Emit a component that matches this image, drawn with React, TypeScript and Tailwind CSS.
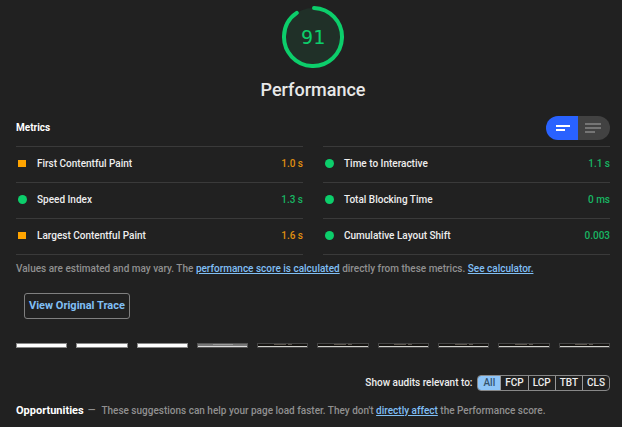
import { useState } from 'react';

type Rating = 'pass' | 'average';
type Metric = { title: string; value: string; rating: Rating };

const columns: Metric[][] = [
  [
    { title: 'First Contentful Paint', value: '1.0 s', rating: 'average' },
    { title: 'Speed Index', value: '1.3 s', rating: 'pass' },
    { title: 'Largest Contentful Paint', value: '1.6 s', rating: 'average' },
  ],
  [
    { title: 'Time to Interactive', value: '1.1 s', rating: 'pass' },
    { title: 'Total Blocking Time', value: '0 ms', rating: 'pass' },
    { title: 'Cumulative Layout Shift', value: '0.003', rating: 'pass' },
  ],
];

const frames = ['blank', 'blank', 'blank', 'partial', 'full', 'full', 'full', 'full', 'full', 'full'];
const filters = ['All', 'FCP', 'LCP', 'TBT', 'CLS'];

function Gauge() {
  return (
    <div className="flex flex-col items-center">
      <svg width="62" height="62" viewBox="0 0 62 62" role="img" aria-label="Score 91">
        <circle cx="31" cy="31" r="29" fill="#203028" />
        <circle
          cx="31"
          cy="31"
          r="29"
          fill="none"
          stroke="#0cce6b"
          strokeWidth="4"
          strokeLinecap="round"
          pathLength="100"
          strokeDasharray="90 100"
          transform="rotate(-88 31 31)"
        />
        <text
          x="31"
          y="38"
          textAnchor="middle"
          fontSize="20"
          fontWeight="400"
          fill="#0cce6b"
          className="font-['DejaVu_Sans_Mono',monospace]"
        >
          91
        </text>
      </svg>
      <h1 className="mt-2 text-[18px] leading-7 font-medium text-[#e8e8e8]">Performance</h1>
    </div>
  );
}

function MetricRow({ title, value, rating }: Metric) {
  const pass = rating === 'pass';
  return (
    <div className="flex h-9 items-center border-t border-[#3a3a3a] pb-0.5 pl-0.5">
      <span className={pass ? 'size-[9px] rounded-full bg-[#0cce6b]' : 'h-[7px] w-2 bg-[#ffa400]'} />
      <span className={pass ? 'ml-2.5 text-[#eeeeee]' : 'ml-[11px] text-[#eeeeee]'}>{title}</span>
      <span className={pass ? 'ml-auto text-[#18b663]' : 'ml-auto text-[#e09010]'}>{value}</span>
    </div>
  );
}

function ViewToggle() {
  return (
    <fieldset className="relative flex h-6 w-16 overflow-hidden rounded-full">
      <label className="flex w-8 items-center justify-center bg-[#2962ff]">
        <input type="radio" name="view" defaultChecked aria-label="Simple view" className="sr-only" />
        <svg width="16" height="16" viewBox="0 0 16 16" fill="#fff">
          <path d="M2 5h14v2H2zM2 9h9v2H2z" />
        </svg>
      </label>
      <label className="flex w-8 items-center justify-center bg-[#424242]">
        <input type="radio" name="view" aria-label="Detailed view" className="sr-only" />
        <svg width="18" height="16" viewBox="0 0 18 16" fill="#757575">
          <path d="M0 3h16v2H0zM0 7h16v2H0zM0 11h10v2H0z" />
        </svg>
      </label>
    </fieldset>
  );
}

function Frame({ kind }: { kind: string }) {
  if (kind === 'blank') return <div className="h-[5px] border border-[#888] bg-white" />;
  if (kind === 'partial') {
    return (
      <div className="flex h-[5px] flex-col items-center border border-[#555] bg-[#777]">
        <div className="h-px w-5 bg-[#999]" />
        <div className="mt-px h-px w-full bg-[#ddd]" />
      </div>
    );
  }
  return (
    <div className="flex h-[5px] flex-col items-center border border-[#444] bg-[#151310]">
      <div className="flex h-px gap-0.5">
        <span className="w-3 bg-[#5a544c]" />
        <span className="w-1 bg-[#5a544c]" />
      </div>
      <div className="mt-px h-px w-full bg-[#d0d0cc]" />
    </div>
  );
}

function Filters() {
  const [active, setActive] = useState('All');
  return (
    <fieldset className="relative flex items-center justify-end text-[#eeeeee]">
      <span className="mr-[5px]">Show audits relevant to:</span>
      <div className="flex h-4 divide-x divide-[#999] overflow-hidden rounded-[4px] border border-[#888]">
        {filters.map((name) => (
          <label
            key={name}
            className={
              active === name
                ? 'flex items-center bg-[#8ec5f8] px-[5px] text-[#33536e]'
                : 'flex items-center px-1 text-[#eeeeee]'
            }
          >
            <input
              type="radio"
              name="filter"
              checked={active === name}
              onChange={() => setActive(name)}
              className="sr-only"
            />
            {name}
          </label>
        ))}
      </div>
    </fieldset>
  );
}

const linkClass = 'text-[#80bff5] underline';

export default function App() {
  return (
    <main className="min-h-screen bg-[#212121] pt-1.5 pr-3 pb-2 pl-4 font-[Roboto,'Liberation_Sans',sans-serif] text-[10px] leading-4 font-medium">
      <Gauge />
      <div className="mt-3 flex items-center justify-between">
        <h2 className="text-[10px] font-bold text-white">Metrics</h2>
        <ViewToggle />
      </div>
      <div className="mt-1.5 grid grid-cols-2 gap-5">
        {columns.map((metrics, i) => (
          <div key={i} className="border-b border-[#3a3a3a]">
            {metrics.map((m) => (
              <MetricRow key={m.title} {...m} />
            ))}
          </div>
        ))}
      </div>
      <p className="mt-1.5 text-[#909090]">
        Values are estimated and may vary. The{' '}
        <a href="#calculated" className={linkClass}>performance score is calculated</a> directly from these metrics.{' '}
        <a href="#calculator" className={linkClass}>See calculator.</a>
      </p>
      <button className="mt-4 ml-2 block h-[26px] rounded-[3px] border border-[#808080] px-1 text-[11px] font-bold text-[#80bff5]">
        View Original Trace
      </button>
      <div className="mt-6 grid grid-cols-10 gap-[9px]">
        {frames.map((kind, i) => (
          <Frame key={i} kind={kind} />
        ))}
      </div>
      <div className="mt-[27px]">
        <Filters />
      </div>
      <p className="mt-3 text-[#909090]">
        <strong className="mr-1 text-[11px] font-bold text-white">Opportunities</strong>—
        <span className="ml-1.5">
          These suggestions can help your page load faster. They don't{' '}
          <a href="#affect" className={linkClass}>directly affect</a> the Performance score.
        </span>
      </p>
    </main>
  );
}
